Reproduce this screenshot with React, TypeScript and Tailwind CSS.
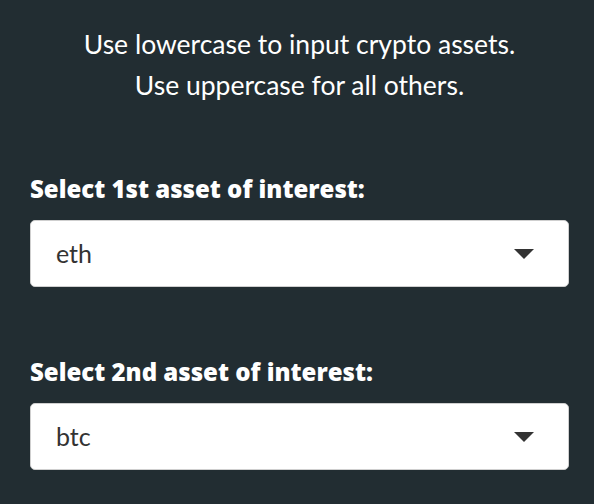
import React from "react"

function SelectBox({ label, value }: { label: string; value: string }) {
  return (
    <div className="flex flex-col">
      <label
        className="text-[24px] font-extrabold leading-[30px] text-white"
        style={{ fontFamily: "'Open Sans', sans-serif" }}
      >
        {label}
      </label>
      <div className="mt-[16px] flex h-[67px] items-center justify-between rounded-[5px] border border-[#cfcfcf] bg-white pl-[25px] pr-[34px]">
        <span className="text-[25px] text-[#333]">{value}</span>
        {/* caret */}
        <svg width="20" height="10" viewBox="0 0 20 10">
          <path d="M0 0 L20 0 L10 10 Z" fill="#333" />
        </svg>
      </div>
    </div>
  )
}

export default function App() {
  return (
    <div
      className="flex h-[504px] w-[594px] flex-col bg-[#222d32] pl-[30px] pr-[25px]"
      style={{ fontFamily: "Lato, 'Noto Sans', sans-serif" }}
    >
      <div className="pt-[24px] text-center text-[26.5px] leading-[41px] text-white">
        <p>Use lowercase to input crypto assets.</p>
        <p>Use uppercase for all others.</p>
      </div>
      <div className="mt-[68px] flex flex-col gap-[70px]">
        <SelectBox label="Select 1st asset of interest:" value="eth" />
        <SelectBox label="Select 2nd asset of interest:" value="btc" />
      </div>
    </div>
  )
}
